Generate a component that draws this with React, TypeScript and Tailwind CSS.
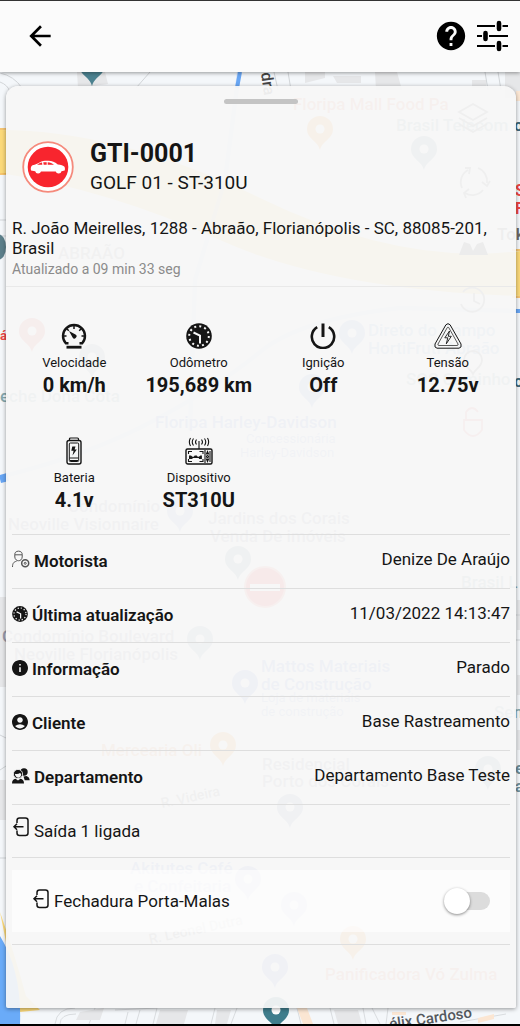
import React, { useState } from 'react';
import { MdArrowBack, MdHelp, MdInfo, MdAccountCircle } from 'react-icons/md';

interface IconProps {
  className?: string;
}

const TuneIcon = ({ className }: IconProps) => (
  <svg viewBox="0 0 32 32" className={className} fill="none" stroke="currentColor" strokeLinecap="round">
    <path strokeWidth="2.2" strokeLinecap="butt" d="M1 6h18M26.500 6H32M1 16h5M13 16h19M1 26h18M26.500 26H32" />
    <path strokeWidth="4.600" d="M23 3v6M9.500 13v6M23 23v6" />
  </svg>
);

const SpeedIcon = ({ className }: IconProps) => (
  <svg viewBox="0 0 26 26" className={className} fill="none" stroke="currentColor">
    <path strokeWidth="2.400" d="M7.500 20.300H4.800A11 11 0 1 1 21.200 20.300H18.500" />
    <path strokeWidth="1.500" d="M13 2v4M5.500 5.500l2.300 2.300M20.500 5.500l-2.300 2.300M2 13h3.500M20.500 13H24" />
    <path fill="currentColor" stroke="none" d="M8 8l6.500 3.600a2.100 2.100 0 1 1-2.900 2.900z" />
    <path strokeWidth="2.800" d="M5.500 24.200h15" />
  </svg>
);

const OdometerIcon = ({ className }: IconProps) => (
  <svg viewBox="0 0 26 26" className={className}>
    <circle cx="13" cy="13" r="12.800" fill="currentColor" />
    <circle cx="13" cy="13" r="9.800" fill="none" stroke="#f7f7f7" strokeWidth="2" strokeDasharray="2 3.131" />
    <path d="M7.500 9.500l6.500 3.200V20.500" fill="none" stroke="#f7f7f7" strokeWidth="2" />
  </svg>
);

const PowerIcon = ({ className }: IconProps) => (
  <svg viewBox="0 0 26 26" className={className} fill="none" stroke="currentColor" strokeWidth="2.600">
    <path d="M13 0.500v13.500" strokeWidth="3" />
    <path d="M7.200 4.200a11.200 11.200 0 1 0 11.600 0" />
  </svg>
);

const VoltageIcon = ({ className }: IconProps) => (
  <svg viewBox="0 0 28 26" className={className} fill="none" stroke="currentColor" strokeLinejoin="round">
    <path strokeWidth="1" d="M11.900 1.800Q14 -0.500 16.100 1.800L27 21Q28 24.800 25 25.200H3Q0 24.800 1 21z" />
    <path strokeWidth=".7" d="M13.300 4.500q.700-.8 1.400 0L24 21q.500 1.300-.8 1.500H4.800Q3.500 22.300 4 21z" />
    <path strokeWidth=".9" d="M15.500 8L10.800 14.800h3L12.300 20.800l5-7.500h-3z" />
  </svg>
);

const BatteryIcon = ({ className }: IconProps) => (
  <svg viewBox="0 0 16 28" className={className} fill="none" stroke="currentColor">
    <path strokeWidth="1.200" d="M3.500 3.500V2q0-1 1-1h7q1 0 1 1v1.500" />
    <rect x="1" y="3.500" width="14" height="23.500" rx="2" strokeWidth="1.400" />
    <rect x="3.300" y="6" width="9.400" height="18.500" rx="1" strokeWidth="1" />
    <path strokeWidth="1" d="M3.500 21h9M4 23.500h8" />
    <path fill="currentColor" stroke="none" d="M9.500 9.500H6.300L5.300 13.800h2.300L6.500 18.500 10.800 12.500H8.600z" />
  </svg>
);

const DeviceIcon = ({ className }: IconProps) => (
  <svg viewBox="0 0 28 28" className={className} fill="none" stroke="currentColor" strokeWidth="1.100">
    <path d="M14 4v8M11.500 2.500a4 4 0 0 0 0 5M16.500 2.500a4 4 0 0 1 0 5M8.500 1.500a6 6 0 0 0 0 7M19.500 1.500a6 6 0 0 1 0 7M5.500 1a8 8 0 0 0 0 8M22.500 1a8 8 0 0 1 0 8" />
    <rect x="1" y="12" width="26" height="15" rx="1.500" strokeWidth="1.400" />
    <path d="M3.500 17v-2.500H7M3.500 22v2.500H7M14.500 14.500H18V17M14.500 24.500H18V22" />
    <path fill="currentColor" stroke="none" d="M4 18.500h2l1.500 1.200h1.200l1-1.200h2l1 1.200h1.200l1.500-1.200h1.500v3.500h-3v-1H7.500v1H4z" />
    <path d="M20 13v13M25 14v11" />
    <path fill="currentColor" d="M22.500 14.500l-1 2.500h2zM22.500 24.500l-1-2.500h2z" />
    <circle cx="22.500" cy="19.500" r="1" />
  </svg>
);

const DriverIcon = ({ className }: IconProps) => (
  <svg viewBox="0 0 18 18" className={className} fill="none" stroke="#555" strokeWidth="1">
    <path d="M2.800 4.500C2.500 0 10.500 0 10.200 4.500v2.500c-.3 5-7 5-7.400 0zM2.800 4.800h7.400M.5 17c0-4 1.500-5.200 4-5.700" />
    <circle cx="13.200" cy="13.300" r="3.500" strokeWidth="1.500" />
    <circle cx="13.200" cy="13.300" r="1" />
  </svg>
);

const GroupIcon = ({ className }: IconProps) => (
  <svg viewBox="0 0 18 16" className={className} fill="currentColor">
    <circle cx="12" cy="4" r="3.700" />
    <path d="M11.500 8.500l3-.5c2 .8 3 2 3.200 4.200h-5z" />
    <circle cx="6" cy="6" r="4.600" stroke="#f7f7f7" strokeWidth=".8" />
    <path d="M2.800 5.800c2 .4 4 .2 5.200-.8l1.200 1c0 5-5.500 5-6.400-.2z" fill="#f7f7f7" />
    <path d="M0 15.500c0-3 1.300-4.200 3.500-4.800L6 12.500l2.500-1.800c2.200.6 3.500 1.800 3.500 4.800z" />
  </svg>
);

const OutputIcon = ({ className }: IconProps) => (
  <svg viewBox="0 0 16 20" className={className} fill="none" stroke="currentColor" strokeWidth="1.500">
    <path d="M4 6V3.500Q4 1 6.500 1H12.500Q15 1 15 3.500V16Q15 18.500 12.500 18.500H6.500Q4 18.500 4 16V13.500" />
    <path d="M10.500 9.800H1.200M4 6.800L1 9.800l3 3" />
  </svg>
);

const CarBadge = ({ className }: IconProps) => (
  <svg viewBox="0 0 52 52" className={className}>
    <circle cx="26" cy="26" r="24.800" fill="#fff" stroke="#f58a7c" strokeWidth="1.800" />
    <circle cx="26" cy="26" r="20.300" fill="#f8252e" />
    <path
      fill="#fff"
      d="M9 29.500c-.6-2.500 0-4.500 1.500-5.300 3-.6 5-1.400 7.500-2.900 2-1.200 4.500-1.600 8-1.500 4.500 0 6.500 1.200 9.800 3.600 3 .3 5.700 1 6.700 2.300.6 1.200.5 2.700.2 3.800l-3.200.7a3 3 0 0 1-5.800.3H19a3 3 0 0 1-5.800-.3z"
    />
    <path fill="#f8252e" d="M15 23.800c1.800-1.300 3-2 5-2.400l.3 2.400zM21.300 21.200h3.400v2.600h-3zM25.700 21.200c2.500.1 4.300.9 6.300 2.600h-6.300z" />
  </svg>
);

interface PinProps {
  x: number;
  y: number;
  color: string;
}

const Pin = ({ x, y, color }: PinProps) => (
  <g transform={`translate(${x} ${y})`}>
    <path fill={color} d="M0 20C-2 11-13 9-13-1a13 13 0 0 1 26 0C13 9 2 11 0 20z" />
    <circle r="4.500" cy="-1" fill="#fff" />
  </g>
);

const pins: PinProps[] = [
  { x: 92, y: 66, color: '#4c8290' },
  { x: 320, y: 130, color: '#f29a2e' },
  { x: 424, y: 150, color: '#7b9aa5' },
  { x: 32, y: 332, color: '#ee675c' },
  { x: 92, y: 358, color: '#9aaab0' },
  { x: 352, y: 334, color: '#8fa5dd' },
  { x: 312, y: 388, color: '#8fa5dd' },
  { x: 180, y: 512, color: '#9aaed0' },
  { x: 238, y: 560, color: '#7b9aa5' },
  { x: 200, y: 640, color: '#8ea2b8' },
  { x: 245, y: 684, color: '#7b90dd' },
  { x: 223, y: 746, color: '#f29a2e' },
  { x: 290, y: 808, color: '#8494b4' },
  { x: 488, y: 770, color: '#7b9aa5' },
  { x: 248, y: 880, color: '#8494dd' },
  { x: 294, y: 906, color: '#8494dd' },
  { x: 353, y: 940, color: '#f29a2e' },
  { x: 275, y: 968, color: '#8494dd' },
  { x: 276, y: 1011, color: '#3f7d8c' },
];

const places = [
  { x: 293, y: 110, color: '#ee8a6e', text: 'Floripa Mall Food Pa' },
  { x: 396, y: 131, color: '#86a8ae', text: 'Brasil Telecom' },
  { x: 58, y: 259, color: '#9a9a9a', text: 'ABRAÃO' },
  { x: 497, y: 240, color: '#666666', text: 'Tok' },
  { x: 368, y: 336, color: '#8fb0dd', text: 'Direto do Campo' },
  { x: 368, y: 354, color: '#8fb0dd', text: 'HortiFruti Abraão' },
  { x: 406, y: 385, color: '#86a8ae', text: 'SOS Caminho' },
  { x: 0, y: 402, color: '#86a8ae', text: 'eche Dona Cota' },
  { x: 155, y: 428, color: '#7b90dd', text: 'Floripa Harley-Davidson' },
  { x: 68, y: 512, color: '#9a9aaa', text: 'Condomínio' },
  { x: 8, y: 530, color: '#9a9aaa', text: 'Neoville Visionnaire' },
  { x: 208, y: 524, color: '#9a9aaa', text: 'Jardins dos Corais' },
  { x: 210, y: 542, color: '#9a9aaa', text: 'Venda De imóveis' },
  { x: 2, y: 642, color: '#9a9aaa', text: 'Condomínio Boulevard' },
  { x: 14, y: 660, color: '#9a9aaa', text: 'Neoville Florianópolis' },
  { x: 261, y: 672, color: '#7b90dd', text: 'Mattos Materiais' },
  { x: 261, y: 690, color: '#7b90dd', text: 'de Construção' },
  { x: 461, y: 588, color: '#86a8ae', text: 'Brasil L' },
  { x: 494, y: 718, color: '#86a8ae', text: 'Sen' },
  { x: 101, y: 756, color: '#ee9a5e', text: 'Mercearia Oli' },
  { x: 262, y: 770, color: '#9a9aaa', text: 'Residencial' },
  { x: 262, y: 787, color: '#9a9aaa', text: 'Porto dos Corais' },
  { x: 130, y: 874, color: '#7b90dd', text: 'Akitutes Café' },
  { x: 134, y: 892, color: '#7b90dd', text: 'e Confeitaria' },
  { x: 325, y: 980, color: '#ee8a6e', text: 'Panificadora Vó Zulma' },
];

const smallPlaces = [
  { x: 246, y: 443, text: 'Concessionária' },
  { x: 240, y: 457, text: 'Harley-Davidson' },
  { x: 261, y: 702, text: 'Loja de materiais' },
  { x: 261, y: 716, text: 'de construção' },
];

const MapBackground = () => (
  <svg
    viewBox="0 72 520 952"
    preserveAspectRatio="xMidYMin slice"
    className="absolute inset-0 w-full h-full font-['Roboto',sans-serif]"
    aria-hidden="true"
  >
    <rect y="72" width="520" height="952" fill="#f4f7fa" />
    {/* blocks and streets */}
    <path fill="#e6e7e9" d="M77 72h28l3 12-30 4zM305 72h20v6l-20 5zM333 76h28v7h-24zM375 72h22l5 18h-26zM505 72h15v26h-15zM472 80h14v8h-14zM0 597h6v90H0zM0 780h6v40H0zM517 600h3v30h-3zM517 675h3v20h-3zM517 730h3v20h-3z" />
    <path fill="none" stroke="#d2d5d8" strokeWidth="1" d="M0 73q14 3 22 15M0 82q8 3 10 10M150 72l-14 16M288 72l3 18M274 72l4 18M485 72l3 18M498 72l3 18M0 220h6M0 236h6M0 735l6 3M0 770l6-4M0 858h6M516 615h4M516 640h4" />
    <path fill="none" stroke="#d9dcdf" strokeWidth="1" d="M55 1024q2-16 20-16M60 1024q0-10 16-10M95 1008l-6 16M115 1010l42-2-4 16M128 1012l-3 12M140 1010l-4 14M215 1008l-4 16M237 1008l-6 16M297 1008l4 16M330 1008l4 16M363 1008l3 16M372 1008l8 16M388 1008l-2 16M460 1022l46-8" />
    <path fill="#e6e7e9" d="M80 1012l24-4-4 12H76zM160 1010h28l-4 14h-28zM217 1010h14l-4 14h-12zM334 1010h24l4 14h-24z" />
    <path fill="#fbe6d3" d="M297 1008h10l6 16h-10zM392 1012h14v3h-14zM516 91h4v10h-4zM478 1018l16-4v5l-16 4z" />
    {/* highway */}
    <path fill="#fbd979" d="M0 130q120 0 260 68t260 53v45Q330 290 220 240T0 173z" />
    <path fill="none" stroke="#f5b547" strokeWidth="1.500" d="M0 129h8M0 174h8M512 250h8M512 297h8" />
    <path fill="none" stroke="#7db1f5" strokeWidth="4" d="M239 72L225 180 195 280 190 430M0 477Q90 455 155 420T260 352 400 308L520 311" opacity=".3" />
    <path fill="none" stroke="#68a6f4" strokeWidth="4" d="M240 72l-3 16M515 311h5" />
    <path fill="none" stroke="#68a6f4" strokeWidth="8" d="M0 479l8-2" />
    {/* sea */}
    <path fill="#fbd979" d="M0 912q14 40 26 84l14 14-20 2z" />
    <path fill="#6aabf8" d="M0 936q22 36 20 88H0z" />
    <ellipse cx="-2" cy="247" rx="8" ry="13" fill="#5c7f8a" />
    {pins.map((p) => (
      <Pin key={`${p.x}-${p.y}`} {...p} />
    ))}
    <circle cx="265" cy="587" r="20" fill="#f8252e" stroke="#f58a7c" strokeWidth="2" />
    <path fill="#fff" d="M250 584h30v7h-30z" />
    {places.map((p) => (
      <text key={p.text} x={p.x} y={p.y} fill={p.color} fontSize="17" fontWeight="500">
        {p.text}
      </text>
    ))}
    {smallPlaces.map((p) => (
      <text key={p.text} x={p.x} y={p.y} fill="#9aaedd" fontSize="13">
        {p.text}
      </text>
    ))}
    <g fontSize="14" fill="#8a8a8a" fontWeight="500">
      <text transform="translate(162 808) rotate(-12)">R. Videira</text>
      <text transform="translate(150 944) rotate(-12)">R. Leonel Dutra</text>
      <text transform="translate(261 73) rotate(82)" fill="#444" fontSize="16">dra</text>
      <text transform="translate(390 1029) rotate(-8)" fill="#54595e" fontSize="15">élix Cardoso</text>
    </g>
    <g fontSize="16" fontWeight="700">
      <text x="515" y="196" fill="#ee4444">S</text>
      <text x="515" y="214" fill="#ee4444">F</text>
      <text x="0" y="340" fill="#ee4444" fontSize="13">á</text>
      <text x="514" y="131" fill="#3f6878">o</text>
      <text x="514" y="387" fill="#3f6878">o</text>
      <text x="515" y="774" fill="#6d8c98">e</text>
      <text x="515" y="792" fill="#6d8c98">a</text>
    </g>
    {/* map tools */}
    <g fill="none" stroke="#777" strokeWidth="1.800">
      <path d="M473 104l14 8-14 8-14-8zM459 118l14 8 14-8M459 124l14 8 14-8" />
      <path d="M462 188a14 14 0 0 1 6-18M478 168a14 14 0 0 1 9 15M483 190a14 14 0 0 1-18 3M465 168l5 0-1 6M490 181l-3 5-5-4M469 189l-5 4 2 5" />
      <path d="M463 292a12 12 0 1 1-2 12M474 293v8l6 3" />
      <path d="M473 374c-2-5-9-7-9-14a9 9 0 0 1 18 0c0 7-7 9-9 14z" />
      <path stroke="#ee7a7a" d="M464 420h18v10q-9 12-18 0zM466 420v-8q6-8 12 0" />
    </g>
    <path fill="#444" d="M459 255l5-13 6 2 3 7 4-7 6-2 5 13z" />
  </svg>
);

interface StatProps {
  icon: React.ReactNode;
  label: string;
  value: string;
}

const Stat = ({ icon, label, value }: StatProps) => (
  <div className="flex flex-col items-center">
    <div className="h-7 flex items-center">{icon}</div>
    <span className="mt-1 text-[13px] leading-[18px]">{label}</span>
    <span className="text-xl leading-[26px] font-bold">{value}</span>
  </div>
);

interface DetailRowProps {
  icon: React.ReactNode;
  label: string;
  value: string;
}

const DetailRow = ({ icon, label, value }: DetailRowProps) => (
  <div className="flex justify-between items-start mx-1.5 h-[54px] pt-3.5 border-t border-[#dedede] text-[17px] leading-[21px]">
    <dt className="flex items-center gap-1 pt-0.5 font-semibold">
      {icon}
      {label}
    </dt>
    <dd>{value}</dd>
  </div>
);

const stats: StatProps[] = [
  { icon: <SpeedIcon className="size-[26px]" />, label: 'Velocidade', value: '0 km/h' },
  { icon: <OdometerIcon className="size-[26px]" />, label: 'Odômetro', value: '195,689 km' },
  { icon: <PowerIcon className="size-[26px]" />, label: 'Ignição', value: 'Off' },
  { icon: <VoltageIcon className="w-7 h-[26px]" />, label: 'Tensão', value: '12.75v' },
  { icon: <BatteryIcon className="w-4 h-7" />, label: 'Bateria', value: '4.1v' },
  { icon: <DeviceIcon className="size-7" />, label: 'Dispositivo', value: 'ST310U' },
];

const details: DetailRowProps[] = [
  { icon: <DriverIcon className="size-[18px] -mt-1.5" />, label: 'Motorista', value: 'Denize De Araújo' },
  { icon: <OdometerIcon className="size-4 -mt-1" />, label: 'Última atualização', value: '11/03/2022 14:13:47' },
  { icon: <MdInfo className="size-4 -mt-1 scale-120" />, label: 'Informação', value: 'Parado' },
  { icon: <MdAccountCircle className="size-4 -mt-1 scale-120" />, label: 'Cliente', value: 'Base Rastreamento' },
  { icon: <GroupIcon className="w-[18px] h-4 -mt-1" />, label: 'Departamento', value: 'Departamento Base Teste' },
];

export default function App() {
  const [unlocked, setUnlocked] = useState(false);

  return (
    <div className="min-h-screen flex flex-col bg-white text-[#151515] font-['Roboto',sans-serif] border-b-2 border-black">
      <header className="relative z-10 flex items-center justify-between h-[72px] pl-6 pr-3 pb-0.5 bg-[#fbfbfb] border-t border-[#333] shadow-[0_1px_4px_rgba(0,0,0,0.4)] text-black">
        <button type="button" aria-label="Voltar">
          <MdArrowBack className="size-8" />
        </button>
        <div className="flex items-center gap-2">
          <button type="button" aria-label="Ajuda">
            <MdHelp className="size-[34px]" />
          </button>
          <button type="button" aria-label="Filtros">
            <TuneIcon className="size-8" />
          </button>
        </div>
      </header>

      <main className="relative flex-1 flex flex-col overflow-hidden">
        <MapBackground />

        <section className="relative flex-1 mt-3.5 mb-4 ml-1.5 mr-1 rounded-t-xl rounded-b-xs bg-[#f7f7f7]/94 shadow-[0_1px_4px_rgba(0,0,0,0.4)]">
          <div className="mx-auto pt-[13px] w-[74px]">
            <div className="h-[5px] rounded-full bg-[#c4c4c4]" />
          </div>

          <div className="pl-1.5 pr-4 pt-[34px] pb-1.5 border-b border-[#e9e9e9]">
            <div className="flex items-center gap-4 pl-2.5">
              <CarBadge className="size-[52px]" />
              <div>
                <h1 className="text-[25px] leading-8 font-bold">GTI-0001</h1>
                <p className="text-[19px] leading-[26px]">GOLF 01 - ST-310U</p>
              </div>
            </div>
            <p className="mt-[22px] text-[17px] leading-5">
              R. João Meirelles, 1288 - Abraão, Florianópolis - SC, 88085-201, Brasil
            </p>
            <p className="text-sm leading-[22px] text-[#8b8b8b]">Atualizado a 09 min 33 seg</p>
          </div>

          <div className="grid grid-cols-4 gap-y-[39px] px-1.5 pt-[35px] pb-[21px]">
            {stats.map((s) => (
              <Stat key={s.label} {...s} />
            ))}
          </div>

          <dl>
            {details.map((d) => (
              <DetailRow key={d.label} {...d} />
            ))}
          </dl>

          <div className="flex items-center gap-1 mx-1.5 pt-3 pb-4 border-t border-[#dedede] text-[17px] leading-5">
            <OutputIcon className="w-[18px] h-5 -mt-1" />
            <span className="pt-1">Saída 1 ligada</span>
          </div>

          <div className="mx-1.5 py-3 border-y border-[#dedede]">
            <div className="flex items-center justify-between h-[62px] px-5 bg-white/60">
              <label htmlFor="trunk-lock" className="flex items-center gap-1 text-[17px] leading-5">
                <OutputIcon className="w-[18px] h-5 -mt-1" />
                Fechadura Porta-Malas
              </label>
              <input
                id="trunk-lock"
                type="checkbox"
                role="switch"
                checked={unlocked}
                onChange={(e) => setUnlocked(e.target.checked)}
                className="relative appearance-none w-10 h-[18px] rounded-full bg-[#dcdcdc] cursor-pointer before:absolute before:-left-1.5 before:-top-1 before:size-[26px] before:rounded-full before:bg-white before:shadow-[0_1px_3px_rgba(0,0,0,0.45)] before:transition-transform checked:bg-red-200 checked:before:translate-x-5"
              />
            </div>
          </div>
        </section>
      </main>
    </div>
  );
}
